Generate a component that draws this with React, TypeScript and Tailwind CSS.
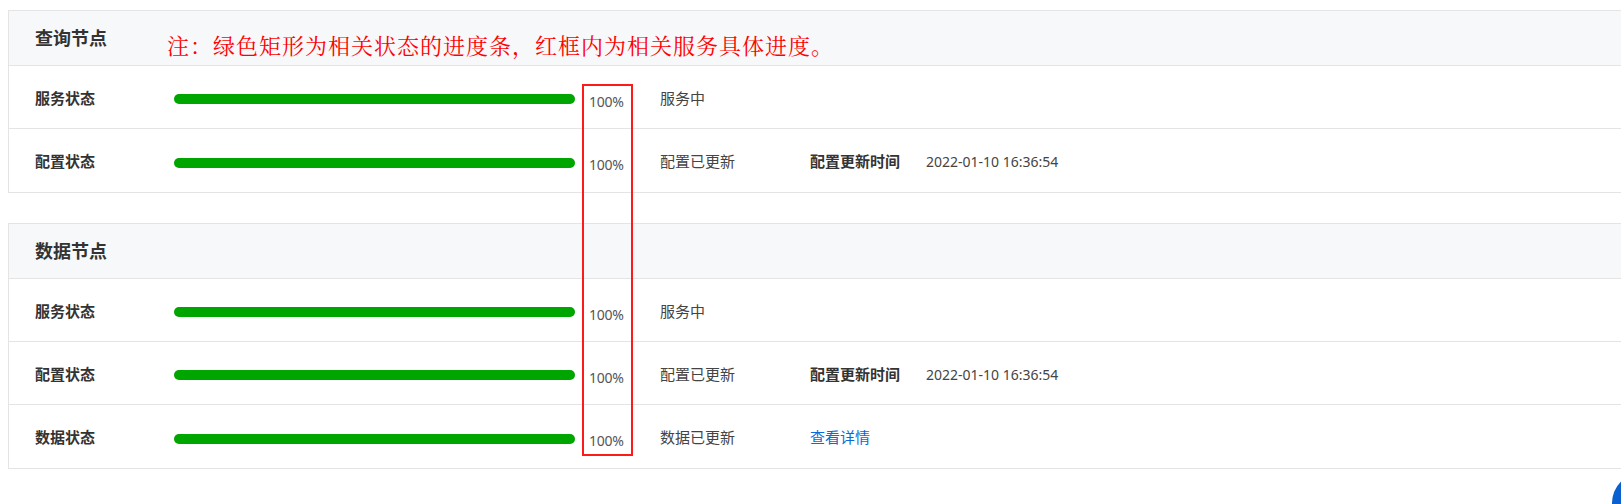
import React from "react";

type Row = {
  label: string;
  percent: number;
  status: string;
  extra?: { kind: "time"; title: string; value: string } | { kind: "link"; text: string };
};

type Section = { title: string; rows: Row[] };

const sections: Section[] = [
  {
    title: "查询节点",
    rows: [
      { label: "服务状态", percent: 100, status: "服务中" },
      {
        label: "配置状态",
        percent: 100,
        status: "配置已更新",
        extra: { kind: "time", title: "配置更新时间", value: "2022-01-10 16:36:54" },
      },
    ],
  },
  {
    title: "数据节点",
    rows: [
      { label: "服务状态", percent: 100, status: "服务中" },
      {
        label: "配置状态",
        percent: 100,
        status: "配置已更新",
        extra: { kind: "time", title: "配置更新时间", value: "2022-01-10 16:36:54" },
      },
      {
        label: "数据状态",
        percent: 100,
        status: "数据已更新",
        extra: { kind: "link", text: "查看详情" },
      },
    ],
  },
];

function ProgressRow({ row, last }: { row: Row; last: boolean }) {
  return (
    <div
      className={`flex h-[63px] items-center pl-[26px] pt-[2px] ${last ? "" : "border-b border-[#e4e4e4]"}`}
    >
      <div className="w-[139px] shrink-0 text-[15px] font-semibold text-[#333]">{row.label}</div>
      <div className="h-[10px] w-[401px] shrink-0 translate-y-[1px] rounded-full bg-[#eee]">
        <div
          className="h-full rounded-full bg-[#00a600]"
          style={{ width: `${row.percent}%` }}
        />
      </div>
      <div className="ml-[14px] w-[71px] shrink-0 translate-y-[3px] text-[14px] tracking-[-0.3px] text-[#555]">
        {row.percent}%
      </div>
      <div className="w-[150px] shrink-0 text-[15px] text-[#444]">{row.status}</div>
      {row.extra?.kind === "time" && (
        <>
          <div className="w-[116px] shrink-0 text-[15px] font-semibold text-[#333]">
            {row.extra.title}
          </div>
          <div className="text-[14px] text-[#444]">{row.extra.value}</div>
        </>
      )}
      {row.extra?.kind === "link" && (
        <a className="cursor-pointer text-[15px] text-[#0a6ad6]">{row.extra.text}</a>
      )}
    </div>
  );
}

function SectionCard({ section }: { section: Section }) {
  return (
    <div className="border-y border-l border-[#e4e4e4] bg-white">
      <div className="flex h-[55px] items-center border-b border-[#e4e4e4] bg-[#f7f8fa] pl-[26px]">
        <h3 className="text-[18px] font-bold text-[#333]">{section.title}</h3>
      </div>
      {section.rows.map((row, i) => (
        <ProgressRow key={i} row={row} last={i === section.rows.length - 1} />
      ))}
    </div>
  );
}

export default function App() {
  return (
    <div className="relative h-[504px] w-full overflow-hidden bg-white pl-[8px] pt-[10px] font-['Noto_Sans','Noto_Sans_CJK_SC',sans-serif]">
      <div className="flex flex-col gap-[30px]">
        {sections.map((s) => (
          <SectionCard key={s.title} section={s} />
        ))}
      </div>

      {/* annotation note over the first header */}
      <div className="pointer-events-none absolute left-[167px] top-[34px] whitespace-nowrap text-[22px] leading-none tracking-[1px] text-[#ff0000] font-['Noto_Serif_CJK_SC','Noto_Sans_CJK_SC',serif]">
        注：绿色矩形为相关状态的进度条，红框内为相关服务具体进度。
      </div>

      {/* red frame around the percentage column */}
      <div className="pointer-events-none absolute left-[582px] top-[84px] h-[372px] w-[51px] border-2 border-[#ff1a1a]" />

      {/* floating help button */}
      <div className="absolute bottom-[-29px] right-[-51px] h-[60px] w-[60px] rounded-full bg-[#0a60d0]" />
    </div>
  );
}
